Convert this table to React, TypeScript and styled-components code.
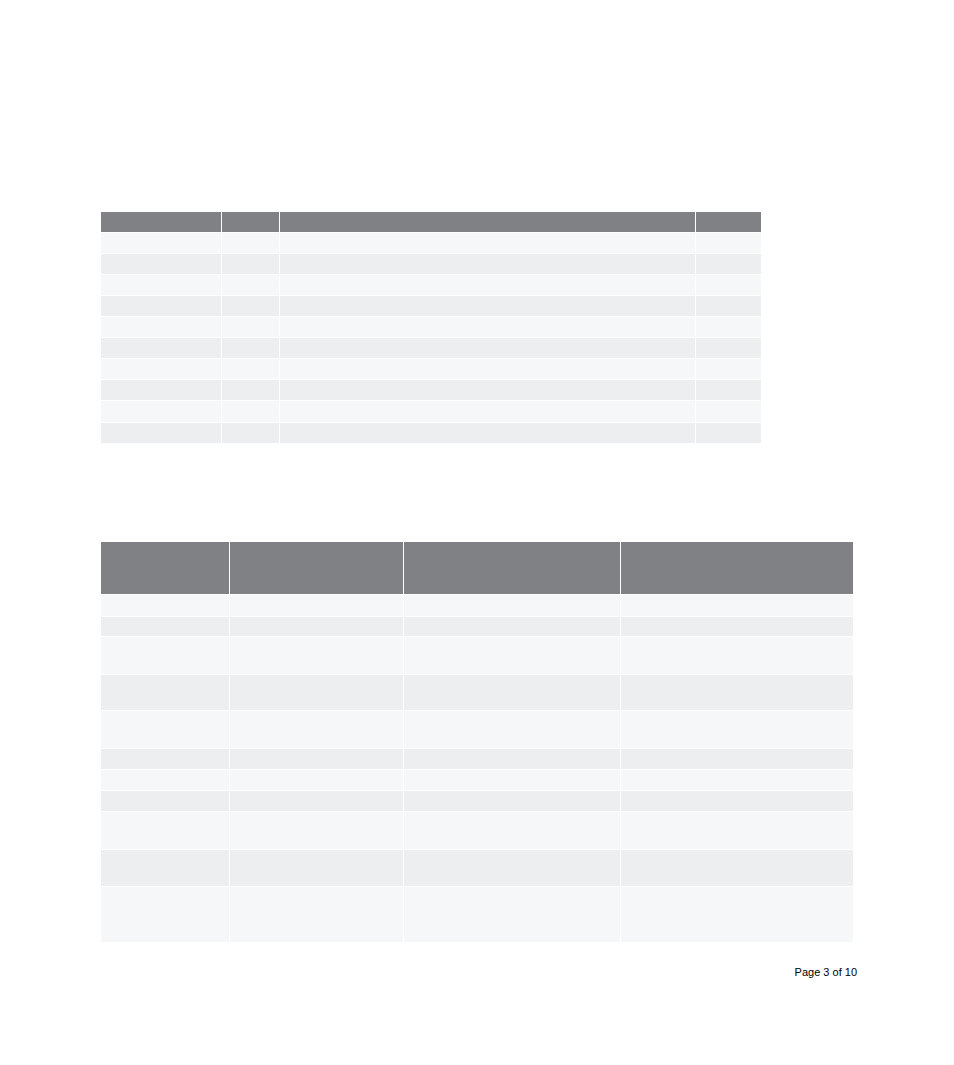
import React from "react";
import styled, { createGlobalStyle } from "styled-components";

/* ===== data ===== */
type TableSpec = {
  cols: number[];
  head: number;
  rows: number[];
};

const scheduleTable: TableSpec = {
  cols: [120, 57, 415, 65],
  head: 20,
  rows: [20, 20, 20, 20, 20, 20, 20, 20, 20.5, 20.5],
};

const detailTable: TableSpec = {
  cols: [128, 173, 216, 232],
  head: 52,
  rows: [20.5, 19.5, 36.5, 35.5, 37, 20, 20, 20, 37, 36, 55],
};

export default function App() {
  return (
    <Page>
      <GlobalStyle />
      <Sheet>
        <FirstBlock>
          <DataTable spec={scheduleTable} />
        </FirstBlock>
        <SecondBlock>
          <DataTable spec={detailTable} />
        </SecondBlock>
        <Footer>Page 3 of 10</Footer>
      </Sheet>
    </Page>
  );
}

function DataTable({ spec }: { spec: TableSpec }) {
  const template = spec.cols.map((c) => `${c}px`).join(" ");
  return (
    <Grid $cols={template}>
      {spec.cols.map((_, i) => (
        <HeadCell key={`h${i}`} $h={spec.head} />
      ))}
      {spec.rows.map((h, r) =>
        spec.cols.map((_, c) => <Cell key={`${r}-${c}`} $h={h} $alt={r % 2 === 1} />)
      )}
    </Grid>
  );
}

/* ===== styled ===== */
const GlobalStyle = createGlobalStyle`
  html, body { margin: 0; padding: 0; background: #fff; }
  body { font-family: "Liberation Sans", Arial, sans-serif; }
`;

const Page = styled.div`
  width: 954px;
  height: 1065px;
  background: #fff;
  overflow: hidden;
`;

const Sheet = styled.div`
  display: flex;
  flex-direction: column;
  padding: 212px 0 0 101px;
`;

const FirstBlock = styled.div`
  display: flex;
`;

const SecondBlock = styled.div`
  display: flex;
  margin-top: 99px;
`;

const Grid = styled.div<{ $cols: string }>`
  display: grid;
  grid-template-columns: ${(p) => p.$cols};
  gap: 1px;
  background: #fff;
`;

const HeadCell = styled.div<{ $h: number }>`
  height: ${(p) => p.$h}px;
  background: #808184;
`;

const Cell = styled.div<{ $h: number; $alt: boolean }>`
  height: ${(p) => p.$h}px;
  background: ${(p) => (p.$alt ? "#edeef0" : "#f6f7f9")};
`;

const Footer = styled.div`
  width: 756px;
  margin-top: 23px;
  text-align: right;
  font-size: 11px;
  line-height: 14px;
  color: #000;
`;
